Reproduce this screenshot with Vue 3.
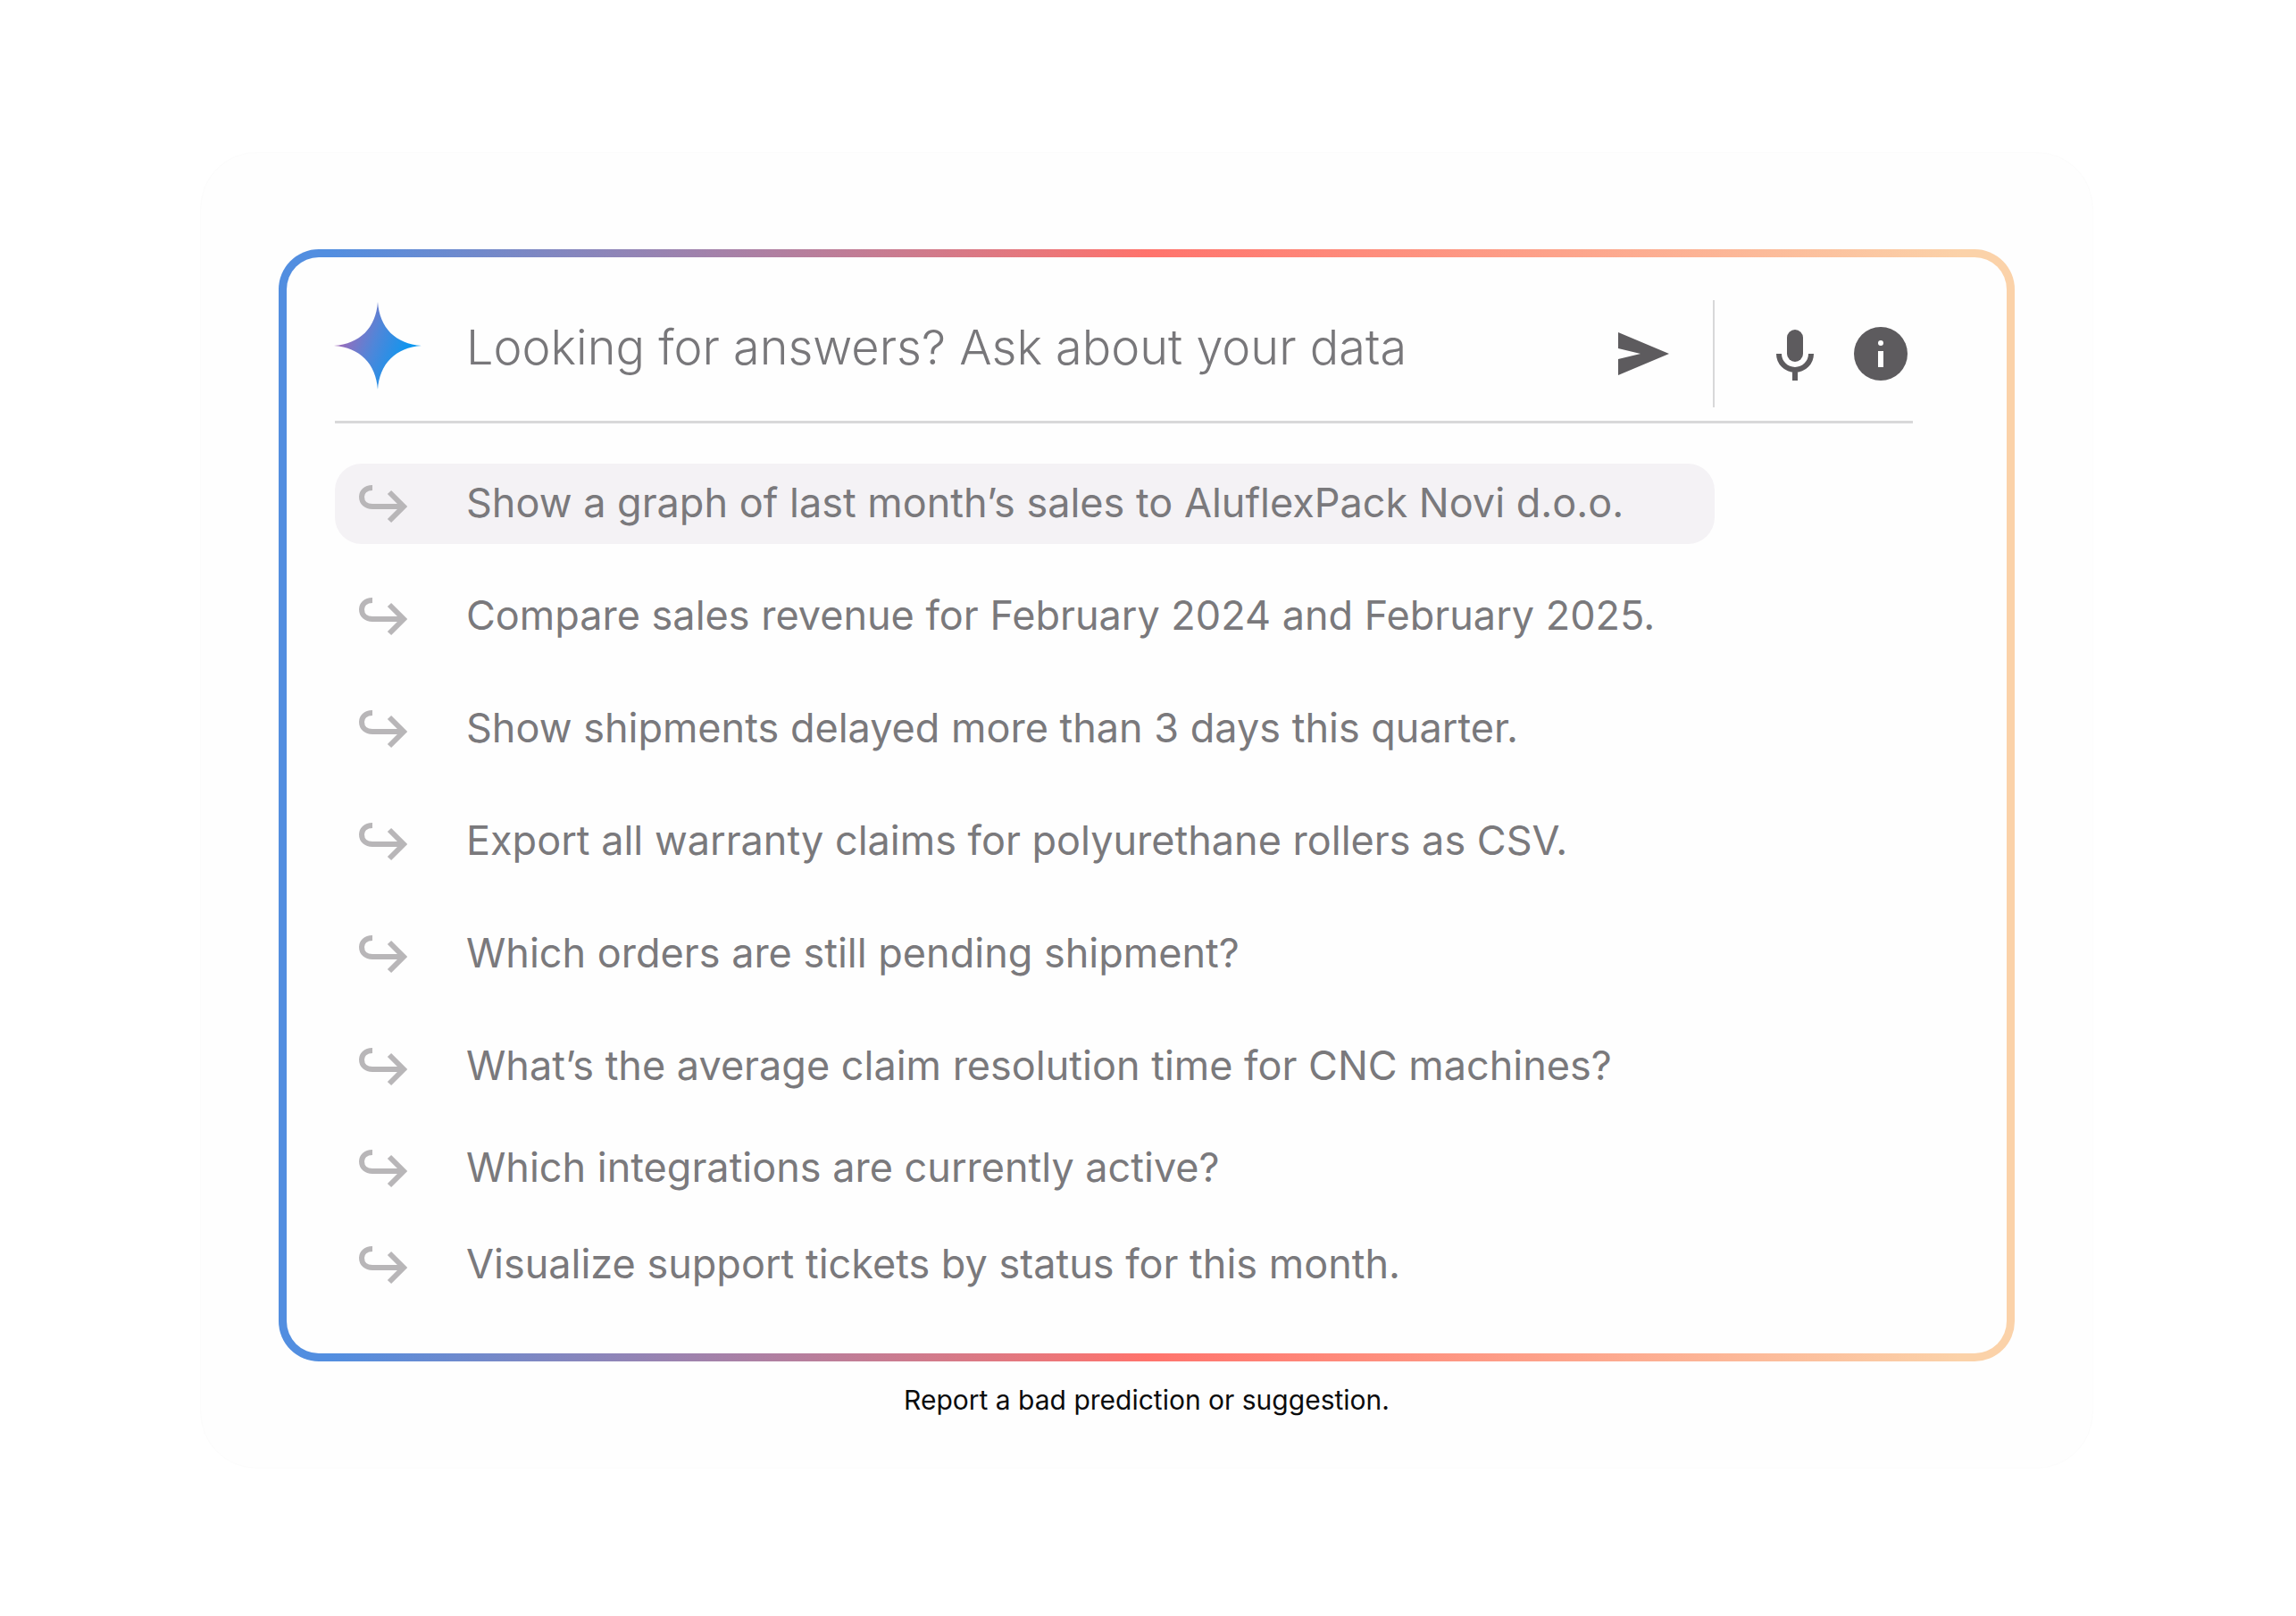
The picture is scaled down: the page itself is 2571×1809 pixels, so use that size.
<script setup>
import { ref } from 'vue'

const question = ref('')
const active = ref(0)

const suggestions = [
  { text: 'Show a graph of last month’s sales to AluflexPack Novi d.o.o.' },
  { text: 'Compare sales revenue for February 2024 and February 2025.' },
  { text: 'Show shipments delayed more than 3 days this quarter.' },
  { text: 'Export all warranty claims for polyurethane rollers as CSV.' },
  { text: 'Which orders are still pending shipment?' },
  { text: 'What’s the average claim resolution time for CNC machines?' },
  { text: 'Which integrations are currently active?', gap: 'snug' },
  { text: 'Visualize support tickets by status for this month.', gap: 'tight' },
]

function pick(index) {
  active.value = index
  question.value = suggestions[index].text
}
</script>

<template>
  <main class="page">
    <section class="card">
      <div class="panel">
        <form class="ask" @submit.prevent>
          <label class="field">
            <svg class="spark" viewBox="0 0 96 96" aria-hidden="true">
              <defs>
                <linearGradient id="spark-fill" gradientUnits="userSpaceOnUse" x1="6" y1="34" x2="80" y2="62">
                  <stop offset="0" stop-color="#a169b8" />
                  <stop offset="0.5" stop-color="#4f86d9" />
                  <stop offset="1" stop-color="#0c97f0" />
                </linearGradient>
              </defs>
              <path
                fill="url(#spark-fill)"
                d="M48 -1C50 28 68 46 97 48C68 50 50 68 48 97C46 68 28 50 -1 48C28 46 46 28 48 -1Z"
              />
            </svg>
            <input
              v-model="question"
              class="question"
              type="text"
              aria-label="Question"
              placeholder="Looking for answers? Ask about your data"
            />
          </label>
          <button class="tool send" type="submit" aria-label="Send">
            <svg viewBox="0 0 60 60" aria-hidden="true">
              <path d="M2 6L59 30L2 54V36L27 30L2 24Z" fill="#5d5b5e" />
            </svg>
          </button>
          <span class="divider"></span>
          <button class="tool mic" type="button" aria-label="Dictate">
            <svg viewBox="0 0 60 60" aria-hidden="true">
              <rect x="21" y="3" width="18" height="36" rx="9" fill="#5d5b5e" />
              <path d="M12 30a18 18 0 0 0 36 0M30 48V60" fill="none" stroke="#5d5b5e" stroke-width="6" />
            </svg>
          </button>
          <button class="tool" type="button" aria-label="Information">
            <svg viewBox="0 0 60 60" aria-hidden="true">
              <circle cx="30" cy="30" r="30" fill="#5d5b5e" />
              <circle cx="30" cy="18" r="3" fill="#fff" />
              <rect x="27" y="27" width="6" height="18" fill="#fff" />
            </svg>
          </button>
        </form>

        <ul class="list">
          <li v-for="(item, i) in suggestions" :key="item.text" :class="item.gap">
            <button class="row" :class="{ active: i === active }" type="button" @click="pick(i)">
              <svg class="arrow" viewBox="0 0 60 60" aria-hidden="true">
                <path
                  d="M18 12C10 12 6 17 6 22C6 29 11 33 18 33H54M37 17L53 33L37 49"
                  fill="none"
                  stroke="#b8b6b8"
                  stroke-width="6"
                />
              </svg>
              <span class="label">{{ item.text }}</span>
            </button>
          </li>
        </ul>
      </div>
      <a class="report" href="#report">Report a bad prediction or suggestion.</a>
    </section>
  </main>
</template>

<style>
body {
  margin: 0;
  background: #ffffff;
}
</style>

<style scoped>
.page {
  box-sizing: border-box;
  padding: 170px 227px 168px 224px;
  font-family: Inter, "Liberation Sans", sans-serif;
}

.card {
  box-sizing: border-box;
  display: flex;
  flex-direction: column;
  align-items: center;
  padding: 108px 87px 56px;
  border: 1px solid #fcfcfc;
  border-radius: 64px;
  background: #fefefe;
}

.panel {
  box-sizing: border-box;
  width: 100%;
  padding: 0 105px 54px 54px;
  border: 9px solid transparent;
  border-radius: 45px;
  background:
    linear-gradient(#fefefe, #fefefe) padding-box,
    linear-gradient(90deg, #528ee0 3%, #ff736c 50%, #fbd2a9 97%) border-box;
}

.ask {
  display: flex;
  align-items: center;
  padding: 48px 6px 15px 0;
  border-bottom: 3px solid #d8d8d9;
}

.field {
  flex: 1;
  display: flex;
  align-items: center;
  gap: 51px;
  padding-bottom: 18px;
}

.spark {
  flex: none;
  width: 96px;
  height: 96px;
  overflow: visible;
}

.question {
  box-sizing: border-box;
  flex: 1;
  min-width: 0;
  height: 74px;
  padding: 2px 0 0;
  border: 0;
  outline: 0;
  background: none;
  color: #78777a;
  font: 300 54px/72px Inter, "Liberation Sans", sans-serif;
}

.question::placeholder {
  color: #78777a;
  opacity: 1;
}

.tool {
  flex: none;
  width: 60px;
  height: 60px;
  padding: 0;
  border: 0;
  background: none;
  cursor: pointer;
}

.tool svg {
  display: block;
  width: 60px;
  height: 60px;
}

.send {
  margin-right: 48px;
}

.divider {
  flex: none;
  width: 2px;
  height: 120px;
  background: #d8d8d9;
}

.mic {
  margin: 0 36px 0 60px;
}

.list {
  display: flex;
  flex-direction: column;
  gap: 18px;
  margin: 0;
  padding: 45px 0 0;
  list-style: none;
}

.list li + li {
  padding-top: 18px;
}

.list li.snug {
  padding-top: 6px;
}

.list li.tight {
  padding-top: 0;
}

.row {
  box-sizing: border-box;
  display: flex;
  align-items: center;
  gap: 63px;
  width: 100%;
  max-width: 1545px;
  height: 90px;
  padding: 0 24px;
  border: 0;
  border-radius: 30px;
  background: none;
  color: #7a797c;
  font: 400 45px/60px Inter, "Liberation Sans", sans-serif;
  text-align: left;
  white-space: nowrap;
  cursor: pointer;
}

.row.active {
  background: #f4f2f5;
}

.label {
  padding-bottom: 2px;
}

.arrow {
  flex: none;
  width: 60px;
  height: 60px;
}

.report {
  margin-top: 23px;
  color: #0b0b0c;
  font-size: 30px;
  line-height: 40px;
  text-decoration: none;
}
</style>
